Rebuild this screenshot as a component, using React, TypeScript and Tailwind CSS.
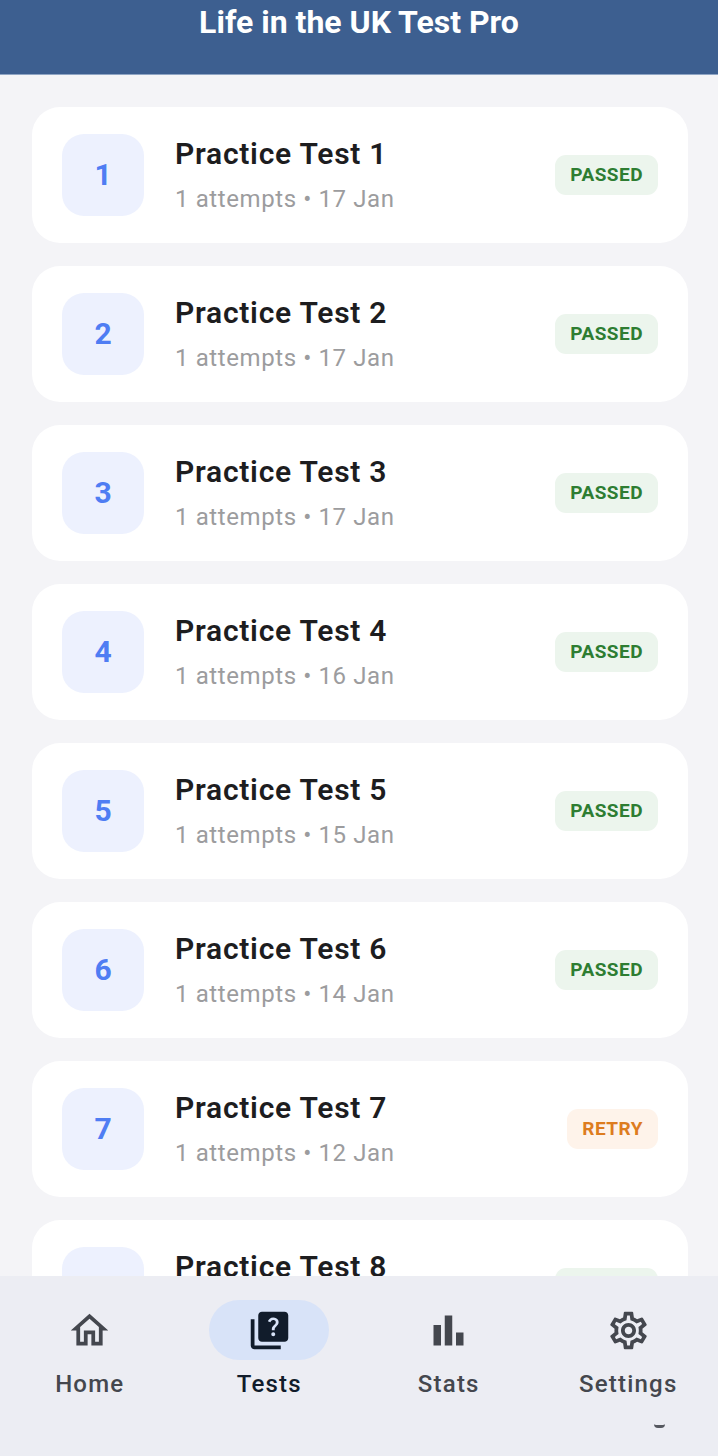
import React, { useState } from 'react';
import { MdBarChart, MdOutlineHome, MdOutlineSettings, MdQuiz } from 'react-icons/md';

interface PracticeTest {
    id: number;
    attempts: number;
    date: string;
    passed: boolean;
}

const tests: PracticeTest[] = [
    { id: 1, attempts: 1, date: '17 Jan', passed: true },
    { id: 2, attempts: 1, date: '17 Jan', passed: true },
    { id: 3, attempts: 1, date: '17 Jan', passed: true },
    { id: 4, attempts: 1, date: '16 Jan', passed: true },
    { id: 5, attempts: 1, date: '15 Jan', passed: true },
    { id: 6, attempts: 1, date: '14 Jan', passed: true },
    { id: 7, attempts: 1, date: '12 Jan', passed: false },
    { id: 8, attempts: 1, date: '12 Jan', passed: true },
];

const tabs = [
    { label: 'Home', Icon: MdOutlineHome },
    { label: 'Tests', Icon: MdQuiz },
    { label: 'Stats', Icon: MdBarChart },
    { label: 'Settings', Icon: MdOutlineSettings },
];

const TestCard: React.FC<{ test: PracticeTest }> = ({ test }) => (
    <li>
        <a href={`#test-${test.id}`} className="flex items-center rounded-[28px] bg-white px-[30px] py-[27px]">
            <span className="flex size-[82px] shrink-0 items-center justify-center rounded-[22px] bg-[#edf1fe] text-[30px] leading-10 font-bold text-[#4f7df3]">
                {test.id}
            </span>
            <div className="ml-[31px] min-w-0 flex-1">
                <h2 className="text-[30px] leading-10 font-semibold tracking-wide text-[#1d1d1f]">Practice Test {test.id}</h2>
                <p className="mt-2 text-[24px] leading-[34px] tracking-wide text-[#9c9c9e]">{test.attempts} attempts • {test.date}</p>
            </div>
            <span className={`rounded-[11px] px-[15px] text-[19px] leading-10 font-bold tracking-wide ${test.passed ? 'bg-[#ecf5ed] text-[#2e7d32]' : 'bg-[#fef3ea] text-[#dd7c1f]'}`}>
                {test.passed ? 'PASSED' : 'RETRY'}
            </span>
        </a>
    </li>
);

const App: React.FC = () => {
    const [active, setActive] = useState('Tests');

    return (
        <div className="flex h-screen flex-col bg-[#f4f4f7] font-[Roboto,sans-serif]">
            <header className="shrink-0 border-b border-[#8fa5c4] bg-[#3d5f90] pb-[30px] text-center">
                <h1 className="text-[32px] leading-[44px] font-bold text-white">Life in the UK Test Pro</h1>
            </header>

            <main className="min-h-0 flex-1 overflow-y-auto py-8 pr-[30px] pl-8 [scrollbar-width:none]">
                <ul className="flex flex-col gap-[23px]">
                    {tests.map(test => <TestCard key={test.id} test={test} />)}
                </ul>
            </main>

            <nav className="shrink-0 bg-[#ecedf3] pt-6 pb-7">
                <div className="grid grid-cols-4">
                    {tabs.map(({ label, Icon }) => (
                        <button
                            key={label}
                            type="button"
                            onClick={() => setActive(label)}
                            className={`flex flex-col items-center gap-2 font-medium ${active === label ? 'text-[#111c2b]' : 'text-[#44474e]'}`}
                        >
                            <span className={`flex h-[60px] w-[120px] items-center justify-center rounded-full ${active === label ? 'bg-[#d8e3f8]' : ''}`}>
                                <Icon className="size-[45px]" />
                            </span>
                            <span className="text-[24px] leading-8 tracking-wider">{label}</span>
                        </button>
                    ))}
                </div>
                {/* edge mark under the last tab */}
                <div className="grid grid-cols-4 pt-6">
                    <span className="col-start-4 ml-[115px] h-1 w-[11px] rounded-b-full border-b-3 border-[#55585f]" />
                </div>
            </nav>
        </div>
    );
};

export default App;
